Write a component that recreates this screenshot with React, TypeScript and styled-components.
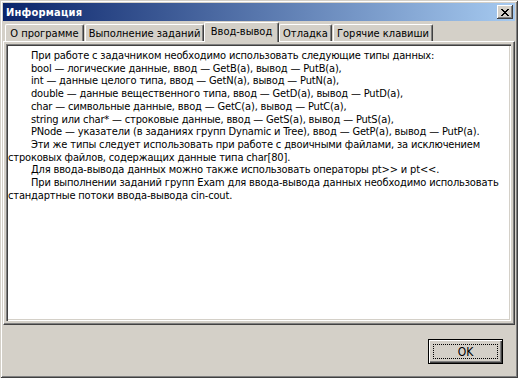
import styled, { createGlobalStyle } from "styled-components";

const GlobalStyle = createGlobalStyle`
  html, body {
    margin: 0;
    padding: 0;
    background: #d4d0c8;
  }
`;

const Window = styled.div`
  box-sizing: border-box;
  width: 518px;
  height: 378px;
  padding: 3px;
  background: #d4d0c8;
  display: flex;
  flex-direction: column;
  font-family: "DejaVu Sans Condensed", "Liberation Sans", sans-serif;
  box-shadow: inset 1px 1px 0 #d4d0c8, inset -1px -1px 0 #404040,
    inset 2px 2px 0 #ffffff, inset -2px -2px 0 #808080;
`;

const TitleBar = styled.div`
  height: 18px;
  display: flex;
  align-items: center;
  justify-content: space-between;
  padding: 0 2px 0 3px;
  background: linear-gradient(to right, #0a246a, #a6caf0);
`;

const Title = styled.span`
  color: #ffffff;
  font-family: "DejaVu Sans Condensed", sans-serif;
  font-weight: bold;
  font-size: 11px;
  letter-spacing: 0.2px;
`;

const CloseButton = styled.div`
  box-sizing: border-box;
  width: 16px;
  height: 14px;
  background: #d4d0c8;
  display: flex;
  align-items: center;
  justify-content: center;
  box-shadow: inset -1px -1px 0 #404040, inset 1px 1px 0 #ffffff,
    inset -2px -2px 0 #808080;
`;

const TabStrip = styled.div`
  height: 20px;
  display: flex;
  align-items: flex-end;
  padding-left: 2px;
`;

const Tab = styled.div<{ $width: number; $active?: boolean; $gap?: number }>`
  position: relative;
  box-sizing: border-box;
  width: ${({ $width }) => $width}px;
  height: ${({ $active }) => ($active ? 20 : 17)}px;
  margin-right: ${({ $gap }) => $gap ?? 0}px;
  margin-bottom: ${({ $active }) => ($active ? -1 : 0)}px;
  z-index: ${({ $active }) => ($active ? 1 : 0)};
  background: #d4d0c8;
  border-top: 1px solid #ffffff;
  border-left: 1px solid #ffffff;
  border-right: 1px solid #404040;
  border-radius: 2px 2px 0 0;
  box-shadow: inset -1px 0 0 #808080;
  font-size: 11px;
  color: #000000;
  display: flex;
  align-items: ${({ $active }) => ($active ? "flex-start" : "center")};
  padding-top: ${({ $active }) => ($active ? 2 : 0)}px;
  justify-content: center;
  white-space: nowrap;
`;

const Panel = styled.div`
  box-sizing: border-box;
  height: 284px;
  padding: 2px 3px 3px 2px;
  border-top: 1px solid #ffffff;
  border-left: 1px solid #ffffff;
  border-right: 1px solid #404040;
  border-bottom: 1px solid #404040;
  box-shadow: inset -1px -1px 0 #808080;
  display: flex;
`;

const TextBox = styled.div`
  flex: 1;
  box-sizing: border-box;
  background: #ffffff;
  padding: 6px 2px 3px;
  box-shadow: inset 1px 1px 0 #808080, inset 2px 2px 0 #404040,
    inset -1px -1px 0 #ffffff, inset -2px -2px 0 #d4d0c8;
  font-family: "DejaVu Sans Condensed", "Liberation Sans", sans-serif;
  font-size: 11px;
  letter-spacing: -0.16px;
  line-height: 12.7px;
  color: #000000;
`;

const Para = styled.p`
  margin: 0;
  text-indent: 23px;
`;

const Footer = styled.div`
  flex: 1;
  display: flex;
  justify-content: flex-end;
  align-items: flex-start;
  padding: 14px 12px 0 0;
`;

const OkButton = styled.div`
  box-sizing: border-box;
  width: 75px;
  height: 25px;
  padding: 4px;
  background: #d4d0c8;
  border: 1px solid #000000;
  box-shadow: inset 1px 1px 0 #ffffff, inset -1px -1px 0 #404040,
    inset -2px -2px 0 #808080;
  display: flex;
`;

const FocusRing = styled.div`
  flex: 1;
  border: 1px dotted #000000;
  display: flex;
  align-items: center;
  justify-content: center;
  font-family: "DejaVu Sans Condensed", sans-serif;
  font-size: 12px;
  color: #000000;
`;

const TABS = [
  { label: "О программе", width: 79, gap: 1 },
  { label: "Выполнение заданий", width: 119, gap: 0 },
  { label: "Ввод-вывод", width: 75, gap: 0, active: true },
  { label: "Отладка", width: 53, gap: 1 },
  { label: "Горячие клавиши", width: 100, gap: 0 },
];

const LINES = [
  "При работе с задачником необходимо использовать следующие типы данных:",
  "bool — логические данные, ввод — GetB(a), вывод — PutB(a),",
  "int — данные целого типа, ввод — GetN(a), вывод — PutN(a),",
  "double — данные вещественного типа, ввод — GetD(a), вывод — PutD(a),",
  "char — символьные данные, ввод — GetC(a), вывод — PutC(a),",
  "string или char* — строковые данные, ввод — GetS(a), вывод — PutS(a),",
  "PNode — указатели (в заданиях групп Dynamic и Tree), ввод — GetP(a), вывод — PutP(a).",
  "Эти же типы следует использовать при работе с двоичными файлами, за исключением строковых файлов, содержащих данные типа char[80].",
  "Для ввода-вывода данных можно также использовать операторы pt>> и pt<<.",
  "При выполнении заданий групп Exam для ввода-вывода данных необходимо использовать стандартные потоки ввода-вывода cin-cout.",
];

const App = () => (
  <>
    <GlobalStyle />
    <Window>
      <TitleBar>
        <Title>Информация</Title>
        <CloseButton>
          <svg width="8" height="7" viewBox="0 0 8 7">
            <path
              d="M0 0h2v1h1v1h2V1h1V0h2v1H7v1H6v1H5v1h1v1h1v1h1v1H6V6H5V5H3v1H2v1H0V6h1V5h1V4h1V3H2V2H1V1H0z"
              fill="#000"
            />
          </svg>
        </CloseButton>
      </TitleBar>
      <TabStrip>
        {TABS.map((t) => (
          <Tab key={t.label} $width={t.width} $gap={t.gap} $active={t.active}>
            {t.label}
          </Tab>
        ))}
      </TabStrip>
      <Panel>
        <TextBox>
          {LINES.map((l) => (
            <Para key={l}>{l}</Para>
          ))}
        </TextBox>
      </Panel>
      <Footer>
        <OkButton>
          <FocusRing>OK</FocusRing>
        </OkButton>
      </Footer>
    </Window>
  </>
);

export default App;
